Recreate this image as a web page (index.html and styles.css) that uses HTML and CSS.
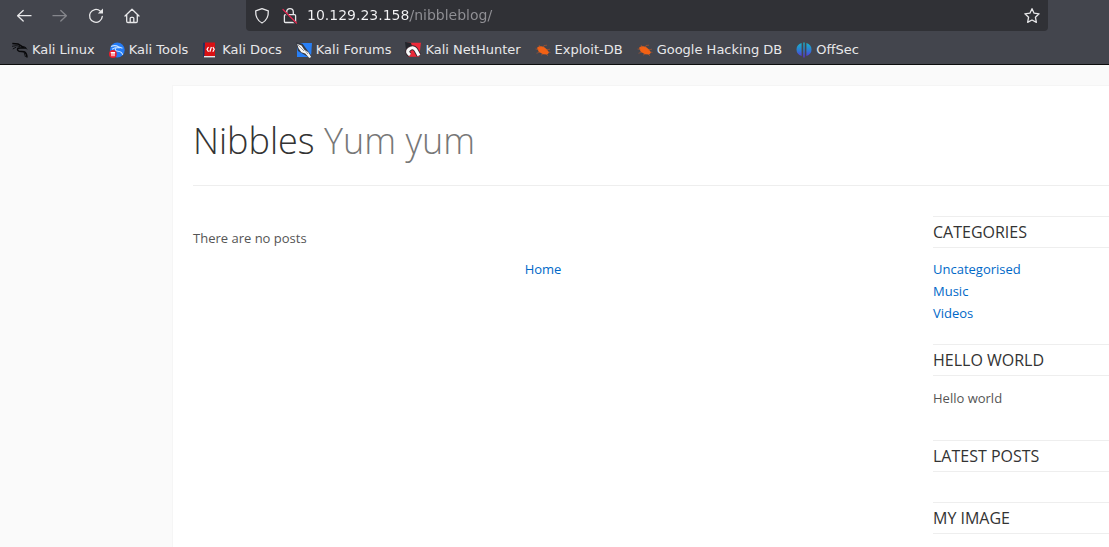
FILE: index.html
```html
<!DOCTYPE html>
<html lang="en">
<head>
<meta charset="utf-8">
<meta name="viewport" content="width=device-width, initial-scale=1">
<title>Nibbles - Yum yum</title>
<link rel="stylesheet" href="styles.css">
</head>
<body>
<div class="chrome">
  <div class="toolbar">
    <div class="nav-buttons">
      <button class="nav-button" type="button" aria-label="Back"><svg class="icon" viewBox="0 0 16 16"><path d="M15 7.700H1.800M7.200 2.500 1.600 7.700l5.600 5.300"/></svg></button>
      <button class="nav-button" type="button" aria-label="Forward" disabled><svg class="icon" viewBox="0 0 16 16"><path d="M1 7.700h13.200M8.800 2.500l5.600 5.200-5.600 5.300"/></svg></button>
      <button class="nav-button" type="button" aria-label="Reload"><svg class="icon" viewBox="0 0 16 16"><path d="M12.200 3.100A6.400 6.400 0 1 0 14.300 8.400"/><path class="solid" d="M15 .4v5.200H9.800z"/></svg></button>
      <button class="nav-button" type="button" aria-label="Home"><svg class="icon" viewBox="0 0 16 16"><path d="M1 8 8 1.200 15 8M2.700 6.700v6.600q0 1.200 1.200 1.200h8.200q1.200 0 1.200-1.200V6.700M6.200 14.500v-4.200q0-1 1-1h1.600q1 0 1 1v4.200"/></svg></button>
    </div>
    <div class="urlbar">
      <button class="url-button" type="button" aria-label="Tracking protection"><svg class="icon" viewBox="0 0 16 16"><path d="M8 .7 14.300 2.900C14.600 8.700 12.500 12.700 8 15 3.500 12.700 1.400 8.700 1.700 2.900z"/></svg></button>
      <button class="url-button" type="button" aria-label="Connection not secure"><svg class="icon" viewBox="0 0 16 16"><path d="M4.700 6.700V4a3.300 3.300 0 0 1 6.600 0v2.700M3.400 6.700h9.200q1 0 1 1v5.800q0 1-1 1H3.400q-1 0-1-1V7.700q0-1 1-1z"/><path class="gap" d="M1 2.400 14 15.400"/><path class="slash" d="M1 1.500 14.500 15"/></svg></button>
      <input class="address" type="text" aria-label="Address" value="10.129.23.158/nibbleblog/">
      <button class="url-button" type="button" aria-label="Bookmark this page"><svg class="icon" viewBox="0 0 16 16"><path d="m8 .7 2.100 4.500 5 .6-3.700 3.400 1 5.100L8 12l-4.400 2.300 1-5.100L.9 5.800l5-.6z"/></svg></button>
    </div>
  </div>
  <nav class="bookmarks" aria-label="Bookmarks">
    <a class="bookmark" href="#"><svg class="favicon" viewBox="0 0 16 16"><path fill="none" stroke="#08080a" stroke-width="1.500" d="M.3 1.400 6 2l4 2.500 4 1.400-3-.2-5 .6Q4.600 8 7 9.200l5 .5q2.800 1 3 5.800"/><path fill="none" stroke="#111215" d="M0 4.300 4.600 3.600 8 4.700M.8 7l3.600-2M11.500 4.500l3.800 2.800M12 10l1.500 5"/></svg>Kali Linux</a>
    <a class="bookmark" href="#"><svg class="favicon" viewBox="0 0 16 16"><circle cx="8.300" cy="8" r="7.400" fill="#247bf5"/><path fill="none" stroke="#c9e3ff" stroke-width="1.100" d="M2 4.500q4-2 7.500.3l4 1.500M3 7.300l3-1.500 5-.2M7 6q-2 3 2 3.300t4.700 3.600"/><circle cx="3.900" cy="12" r="3.900" fill="#eb1c2c"/><path fill="none" stroke="#fff" stroke-width="1.200" d="M1.700 10.600h4.400M3 10.600v3.600M5 10.600v3.600"/></svg>Kali Tools</a>
    <a class="bookmark" href="#"><svg class="favicon" viewBox="0 0 16 16"><path fill="#1c3262" d="M1 .7h3v14H1z"/><path fill="#d91014" d="M3 .5h10v14H2.400z"/><path fill="#e7e7ec" d="M2 14h11v1.400H2z"/><path fill="none" stroke="#fff" stroke-width="1.200" d="M6.500 5 5 7.300 6.500 9.700M10.800 5l1.400 2.200-1.400 2.500M9.400 5 7.800 9.700"/></svg>Kali Docs</a>
    <a class="bookmark" href="#"><svg class="favicon" viewBox="0 0 16 16"><path fill="#287ff5" d="M1 1h15l-1 14H1z"/><path fill="#373a42" d="m0 0 6.500 1.800 9 12-2 2L2 9z"/><path fill="#f5f5f5" d="m1.200 2 4.300 1.500 2.600 4 4.200 2.800 2.800 4.800-1.800.8-4-4.500-4-1.100-2.800-4z"/><path stroke="#555963" stroke-width=".6" d="m2 3 6 6M8 7l4 5"/></svg>Kali Forums</a>
    <a class="bookmark" href="#"><svg class="favicon" viewBox="0 0 16 16"><path fill="#ed2939" d="M2 .8h14l-1.800 14H3z"/><path fill="#22242a" d="m0 0 6 1 1 3-6 4z"/><path fill="none" stroke="#3b2831" stroke-width="5" d="M5 13Q.8 10 4 7.300 8 4 10.800 7.800L14 13.500"/><path fill="none" stroke="#fafafa" stroke-width="3.200" d="M5 13Q.8 10 4 7.300 8 4 10.800 7.800L14 13.500"/></svg>Kali NetHunter</a>
    <a class="bookmark" href="#"><svg class="favicon" viewBox="0 0 16 16"><path fill="#f26114" d="M2 5.800Q5 3.400 9 5l3 2.400 2 3-1.600 2.100-4.300-.2-4.400-2.500z"/><path fill="none" stroke="#c95a28" stroke-width=".5" d="m5 6-.8-3M8 6l1-2.500 3-.3M11 8l4-.8M13 10l2.500.4M4 7.500.5 7M5 10l-3.500 1.300M8 12l-2 1.200M11 12l2 2"/></svg>Exploit-DB</a>
    <a class="bookmark" href="#"><svg class="favicon" viewBox="0 0 16 16"><path fill="#f26114" d="M2 5.800Q5 3.400 9 5l3 2.400 2 3-1.600 2.100-4.300-.2-4.400-2.500z"/><path fill="none" stroke="#c95a28" stroke-width=".5" d="m5 6-.8-3M8 6l1-2.500 3-.3M11 8l4-.8M13 10l2.500.4M4 7.500.5 7M5 10l-3.500 1.300M8 12l-2 1.200M11 12l2 2"/></svg>Google Hacking DB</a>
    <a class="bookmark" href="#"><svg class="favicon" viewBox="0 0 16 16"><defs><linearGradient id="offsec" gradientUnits="userSpaceOnUse" x1="0" y1="0" x2="0" y2="16"><stop offset="0" stop-color="#18b8c8"/><stop offset=".5" stop-color="#2a7fd2"/><stop offset="1" stop-color="#6228d8"/></linearGradient></defs><path fill="url(#offsec)" d="M5.600 1v13Q.5 12.400.5 7.500.5 2.700 5.600 1zM7.300.5h1.400v15H7.300zM10.400 1q5.100 1.700 5.100 6.500 0 4.900-5.100 6.500z"/></svg>OffSec</a>
  </nav>
</div>
<div class="page">
  <header class="site-header">
    <h1 class="site-title">Nibbles <span class="slogan">Yum yum</span></h1>
  </header>
  <div class="columns">
    <main class="content">
      <p class="message">There are no posts</p>
      <nav class="pager" aria-label="Pages"><a class="link" href="#">Home</a></nav>
    </main>
    <aside class="sidebar">
      <section class="widget">
        <h2 class="widget-title">Categories</h2>
        <ul class="widget-body category-list">
          <li><a class="link" href="#">Uncategorised</a></li>
          <li><a class="link" href="#">Music</a></li>
          <li><a class="link" href="#">Videos</a></li>
        </ul>
      </section>
      <section class="widget">
        <h2 class="widget-title">Hello world</h2>
        <p class="widget-body note">Hello world</p>
      </section>
      <section class="widget">
        <h2 class="widget-title">Latest posts</h2>
      </section>
      <section class="widget">
        <h2 class="widget-title">My image</h2>
      </section>
    </aside>
  </div>
</div>
</body>
</html>
```

FILE: styles.css
```css
* {
  box-sizing: border-box;
}

body {
  margin: 0;
  min-height: 100vh;
  display: flex;
  flex-direction: column;
  background: #fafafa;
  color: #555;
  font: 13px/22px "Open Sans", sans-serif;
}

h1, h2, p, ul {
  margin: 0;
  padding: 0;
  font-weight: 400;
}

button {
  display: flex;
  padding: 0;
  border: 0;
  background: none;
  color: inherit;
}

.chrome {
  background: #43454d;
  border-bottom: 1px solid #0c0c0d;
  color: #e8e8ea;
  font-family: "DejaVu Sans", sans-serif;
}

.toolbar {
  display: flex;
  padding: 0 61px 0 16px;
  gap: 106px;
}

.nav-buttons {
  display: flex;
  align-items: center;
  gap: 20px;
}

.nav-button:disabled {
  opacity: 0.4;
}

.icon {
  width: 16px;
  height: 16px;
  fill: none;
  stroke: currentColor;
  stroke-width: 1.3;
  stroke-linejoin: round;
  stroke-linecap: round;
}

.icon .solid {
  fill: currentColor;
  stroke: none;
}

.icon .gap {
  stroke: #303136;
  stroke-width: 2;
}

.icon .slash {
  stroke: #e22850;
}

.urlbar {
  flex: 1;
  display: flex;
  align-items: center;
  gap: 12px;
  height: 31px;
  padding: 0 8px;
  border-radius: 0 0 4px 4px;
  background: #303136;
}

.address {
  flex: 1;
  min-width: 0;
  height: 24px;
  margin-left: -3px;
  padding: 0 0 2px;
  border: 0;
  outline: 0;
  background: linear-gradient(90deg, #f4f4f6 103px, #919196 103px);
  -webkit-background-clip: text;
  background-clip: text;
  color: transparent;
  font: 14px/22px "DejaVu Sans", sans-serif;
}

.bookmarks {
  display: flex;
  gap: 14px;
  padding: 9px 12px 4px;
}

.bookmark {
  display: flex;
  align-items: center;
  gap: 4px;
  color: inherit;
  font-size: 13px;
  line-height: 20px;
  text-decoration: none;
  white-space: nowrap;
}

.favicon {
  width: 16px;
  height: 16px;
}

.page {
  flex: 1;
  margin: 20px 0 0 172px;
  padding-left: 20px;
  border: solid #f5f5f5;
  border-width: 1px 0 0 1px;
  background: #fff;
}

.site-header {
  padding: 25px 0 14px;
  border-bottom: 1px solid #eee;
}

.site-title {
  color: #333;
  font-size: 36px;
  font-weight: 300;
  line-height: 60px;
}

.slogan {
  color: #777;
}

.columns {
  display: flex;
  gap: 40px;
  padding-top: 30px;
}

.content {
  flex: 1;
  padding-top: 11px;
}

.pager {
  margin-top: 9px;
  text-align: center;
}

.link {
  color: #0069c8;
  text-decoration: none;
}

.sidebar {
  flex: 0 0 176px;
}

.widget {
  margin-bottom: 30px;
}

.widget-title {
  border: solid #eee;
  border-width: 1px 0;
  color: #333;
  font-size: 16px;
  line-height: 30px;
  text-transform: uppercase;
}

.widget-body {
  padding-top: 10px;
}

.category-list {
  margin-bottom: -10px;
  list-style: none;
}

.note {
  line-height: 24px;
}
```
